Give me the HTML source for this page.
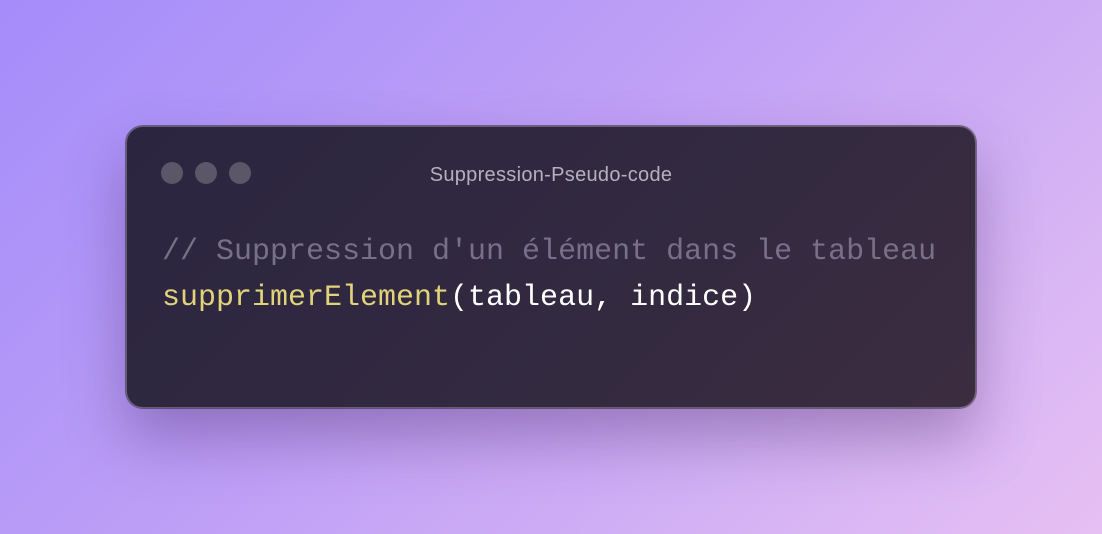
<!DOCTYPE html>
<html><head><meta charset="utf-8"><style>
html,body{margin:0;padding:0;width:1102px;height:534px;overflow:hidden}
body{background:linear-gradient(135deg,#a48cfa 0%,#bfa0f6 45%,#e6c0f3 100%);position:relative}
.card{position:absolute;left:126px;top:126px;width:848px;height:280px;border:1px solid #65606c;border-radius:17px;
background:linear-gradient(135deg,#2b2540 0%,#332a40 60%,#3c2c40 100%);
box-shadow:0 30px 60px rgba(60,30,90,0.35),0 0 0 1px rgba(0,0,0,0.4)}
.dot{position:absolute;top:35px;width:22px;height:22px;border-radius:50%;background:#5c5669}
.title{position:absolute;left:0;right:0;top:37px;text-align:center;font:20px "Liberation Sans",sans-serif;color:#b6b0bd;letter-spacing:0.3px}
.code{position:absolute;left:35px;top:102px;font:30px/46px "Liberation Mono",monospace;white-space:pre;color:#fff}
.c{color:#787088}.f{color:#e0d37a}
</style></head><body>
<div class="card">
<div class="dot" style="left:34px"></div><div class="dot" style="left:68px"></div><div class="dot" style="left:102px"></div>
<div class="title">Suppression-Pseudo-code</div>
<div class="code"><span class="c">// Suppression d'un élément dans le tableau</span>
<span class="f">supprimerElement</span>(tableau, indice)</div>
</div>
</body></html>
